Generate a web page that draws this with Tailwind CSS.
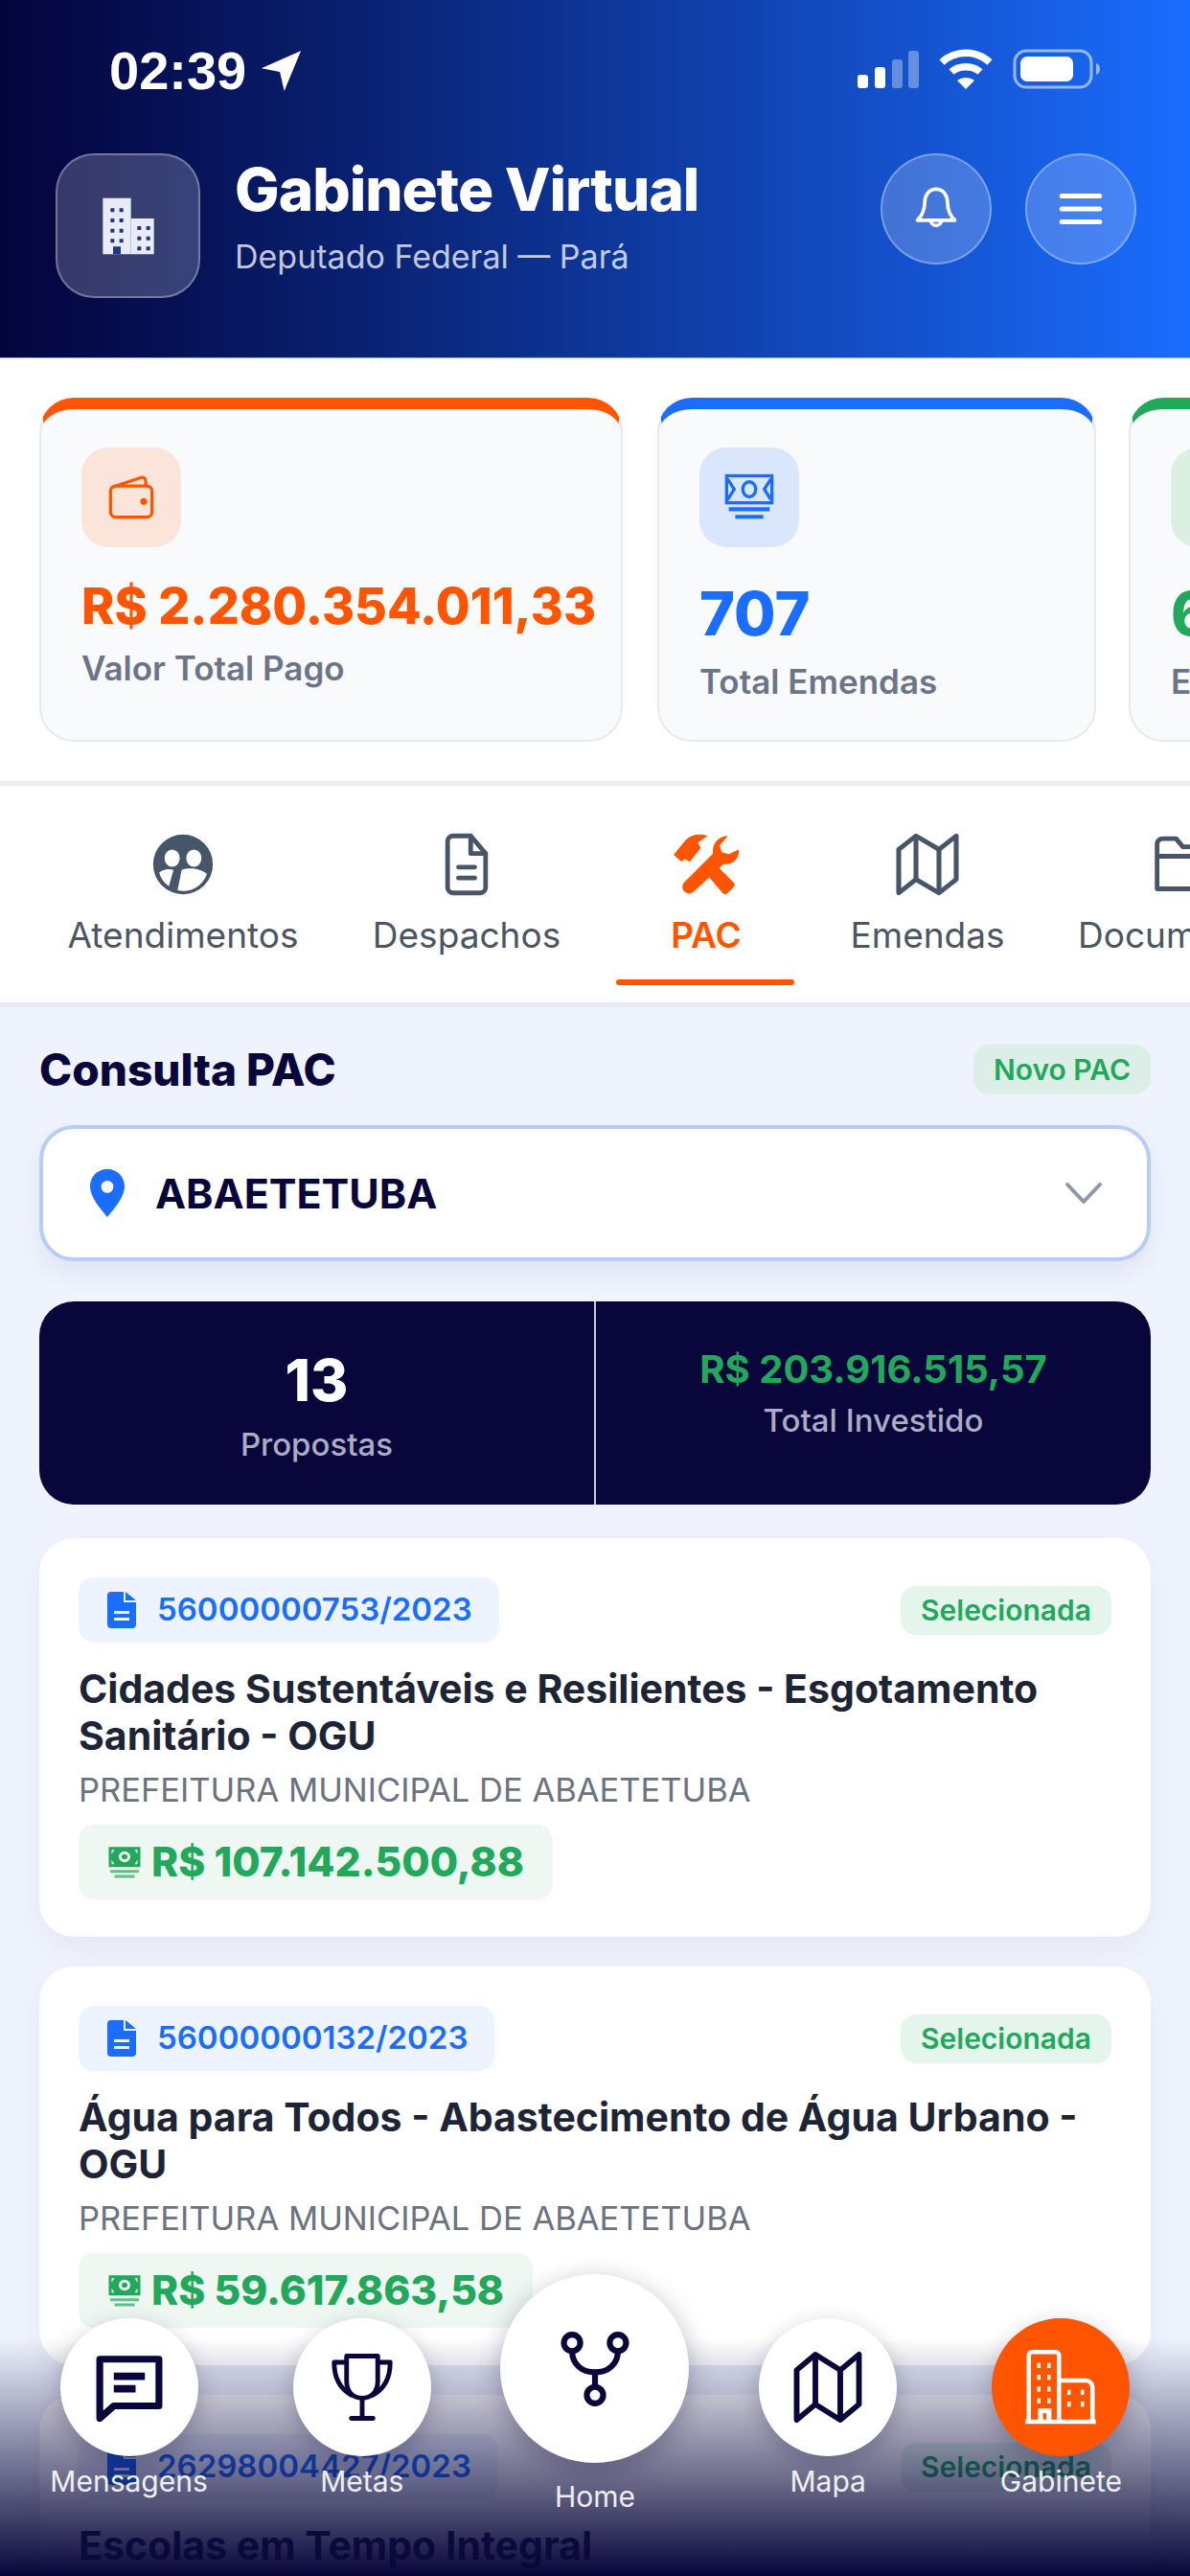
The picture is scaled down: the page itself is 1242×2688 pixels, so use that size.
<!DOCTYPE html>
<html lang="pt-BR">

<head>
    <meta charset="UTF-8" />
    <meta name="viewport" content="width=device-width, initial-scale=1.0" />
    <title>Gabinete Virtual</title>
    <script src="https://cdn.jsdelivr.net/npm/@tailwindcss/browser@4"></script>
</head>

<body class="font-['Inter','Noto_Sans',sans-serif] bg-[#eff3fd]">
    <div class="relative w-[1242px] h-[2688px] overflow-hidden bg-[#eff3fd]">

        <!-- Header -->
        <header class="h-[374px] bg-linear-to-r from-[#04043c] to-[#1a6dff] text-white px-[58px] border-b border-[#9dbcf0]">
            <div class="h-[160px] flex items-start justify-between pl-[56px]">
                <div class="flex items-center gap-[14px] mt-[46px]">
                    <span class="text-[56px] leading-[56px] font-semibold font-['Liberation_Sans',sans-serif]">02:39</span>
                    <svg class="w-[44px] h-[44px]" viewBox="0 0 24 24" fill="#fff"><path d="M23.500 .5 1 10.500l10.500 2L14 23.500z" /></svg>
                </div>
                <div class="flex items-center gap-[20px] mt-[50px] -translate-x-[35px]">
                    <svg class="w-[64px] h-[40px]" viewBox="0 0 64 40"><rect x="0" y="26" width="11" height="14" rx="3" fill="#fff" /><rect x="18" y="18" width="11" height="22" rx="3" fill="#fff" /><rect x="36" y="10" width="11" height="30" rx="3" fill="#fff" fill-opacity=".35" /><rect x="53" y="1" width="11" height="39" rx="3" fill="#fff" fill-opacity=".35" /></svg>
                    <svg class="w-[58px] h-[44px]" viewBox="0 0 58 44" fill="none" stroke="#fff" stroke-width="7.500"><path d="M4 15c14-13 36-13 50 0" /><path d="M14 25c8-7 22-7 30 0" /><path d="m29 43-9-9c5-4 13-4 18 0z" fill="#fff" stroke="none" /></svg>
                    <svg class="w-[92px] h-[42px]" viewBox="0 0 92 42"><rect x="2" y="2" width="80" height="38" rx="12" fill="none" stroke="#fff" stroke-opacity=".55" stroke-width="3" /><rect x="8" y="8" width="55" height="26" rx="7" fill="#fff" /><path d="M87 15c3 1 4 3 4 6s-1 5-4 6z" fill="#fff" fill-opacity=".55" /></svg>
                </div>
            </div>
            <div class="flex items-center">
                <div class="w-[151px] h-[151px] rounded-[40px] bg-white/20 border-2 border-white/30 flex items-center justify-center">
                    <svg class="w-[64px] h-[64px]" viewBox="0 0 24 24"><path d="M2 1h11v22H2z" fill="#e9ebf7" /><path d="M13 9h9v14h-9z" fill="#e9ebf7" /><path d="M5 5h1.500v1.500H5zM8.500 5H10v1.500H8.500zM5 9h1.500v1.500H5zM8.500 9H10v1.500H8.500zM5 13h1.500v1.500H5zM8.500 13H10v1.500H8.500zM5 17h1.500v1.500H5zM8.500 17H10v1.500H8.500zM6 20h3v3H6zM15.500 12H17v1.500h-1.500zM19 12h1.500v1.500H19zM15.500 16H17v1.500h-1.500zM19 16h1.500v1.500H19zM15.500 20H17v1.500h-1.500zM19 20h1.500v1.500H19z" fill="#24357f" /></svg>
                </div>
                <div class="ml-[36px] flex-1 -mt-[20px]">
                    <h1 class="text-[62px] leading-[72px] font-extrabold tracking-[-1px]">Gabinete Virtual</h1>
                    <p class="text-[34px] leading-[44px] mt-[12px] text-white/75">Deputado Federal — Pará</p>
                </div>
                <div class="flex gap-[35px] -mt-[36px] translate-x-[2px]">
                    <div class="w-[116px] h-[116px] rounded-full bg-white/20 border-2 border-white/30 flex items-center justify-center">
                        <svg class="w-[52px] h-[52px]" viewBox="0 0 24 24" fill="none" stroke="#fff" stroke-width="1.700" stroke-linecap="round" stroke-linejoin="round"><path d="M12 2.500c-3.500 0-5.500 3-5.500 6.500 0 4-1.500 6.500-3.500 8.500h18c-2-2-3.500-4.500-3.500-8.500 0-3.500-2-6.500-5.500-6.500z" /><path d="M9.500 17.500a2.500 2.500 0 0 0 5 0" /></svg>
                    </div>
                    <div class="w-[116px] h-[116px] rounded-full bg-white/20 border-2 border-white/30 flex items-center justify-center">
                        <svg class="w-[50px] h-[50px]" viewBox="0 0 24 24" fill="none" stroke="#fff" stroke-width="2.400" stroke-linecap="round"><path d="M2.500 5.500h19M2.500 12h19M2.500 18.500h19" /></svg>
                    </div>
                </div>
            </div>
        </header>

        <!-- Stats -->
        <section class="h-[446px] bg-white border-b-[5px] border-[#ececec] overflow-hidden flex gap-[36px] pl-[41px] pt-[41px]">
            <div class="w-[609px] h-[359px] shrink-0 rounded-[36px] bg-[#f9fafc] border-2 border-t-[12px] border-[#e6e9f0] border-t-[#ff5500] pl-[42px] pt-[40px]">
                <div class="w-[104px] h-[104px] rounded-[28px] bg-[#fbe5da] flex items-center justify-center">
                    <svg class="w-[52px] h-[52px]" viewBox="0 0 24 24" fill="none" stroke="#ff5500" stroke-width="1.500" stroke-linejoin="round"><rect x="2" y="6.500" width="20" height="15" rx="2.500" /><path d="M3 7 16.500 2.500c1.500-.5 2.500.5 2.500 2v2" /><circle cx="18" cy="14" r=".9" fill="#ff5500" /></svg>
                </div>
                <div class="mt-[27px] text-[52px] leading-[70px] font-extrabold text-[#ff5500] whitespace-nowrap">R$ 2.280.354.011,33</div>
                <div class="mt-[7px] text-[35px] leading-[44px] font-semibold text-[#6b7488]">Valor Total Pago</div>
            </div>
            <div class="w-[458px] h-[359px] shrink-0 rounded-[36px] bg-[#f9fafc] border-2 border-t-[12px] border-[#e6e9f0] border-t-[#1a6dff] pl-[42px] pt-[40px]">
                <div class="w-[104px] h-[104px] rounded-[28px] bg-[#dae6fb] flex items-center justify-center">
                    <svg class="w-[54px] h-[54px]" viewBox="0 0 24 24" fill="none" stroke="#1a6dff" stroke-width="1.500"><rect x="1.500" y="2" width="21" height="12.500" /><ellipse cx="12" cy="8.250" rx="3" ry="3.500" /><path d="m2 3.500 3 4.750-3 4.750M22 3.500l-3 4.750L22 13" /><path d="M2.500 17.500h19M5.500 21h13" stroke-width="1.800" /></svg>
                </div>
                <div class="mt-[27px] text-[63px] leading-[84px] font-extrabold text-[#1a6dff]">707</div>
                <div class="mt-[7px] text-[35px] leading-[44px] font-semibold text-[#6b7488] whitespace-nowrap">Total Emendas</div>
            </div>
            <div class="w-[456px] h-[359px] shrink-0 -ml-[2px] rounded-[36px] bg-[#f9fafc] border-2 border-t-[12px] border-[#e6e9f0] border-t-[#22a85a] pl-[42px] pt-[40px]">
                <div class="w-[104px] h-[104px] rounded-[28px] bg-[#dbefe3]"></div>
                <div class="mt-[27px] text-[63px] leading-[84px] font-extrabold text-[#22a85a]">6</div>
                <div class="mt-[7px] text-[35px] leading-[44px] font-semibold text-[#6b7488] whitespace-nowrap">Em</div>
            </div>
        </section>

        <!-- Tabs -->
        <nav class="relative h-[231px] bg-white border-b-[5px] border-[#e8ebf2] overflow-hidden text-[#4b5563] text-[37px] leading-[44px]">
            <div class="flex items-start pt-[48px] whitespace-nowrap">
                <div class="w-[252px] ml-[65px] flex flex-col items-center shrink-0">
                    <svg class="w-[68px] h-[68px]" viewBox="0 0 24 24" fill="#475569"><path fill-rule="evenodd" d="M12 1a11 11 0 1 0 0 22 11 11 0 0 0 0-22zM8 6.500a2.800 3.200 0 1 1 0 6.400 2.800 3.200 0 0 1 0-6.400zm8 0a2.800 3.200 0 1 1 0 6.400 2.800 3.200 0 0 1 0-6.400zM3.200 15c1.200-1 3-1.500 5.300-1L6.800 20a9 9 0 0 1-3.600-5zm6.800 6.500L11.500 14c3-1 7-.5 9.300 1.500A9 9 0 0 1 10 21.500z" /></svg>
                    <span class="mt-[18px]">Atendimentos</span>
                </div>
                <div class="w-[196px] ml-[72px] flex flex-col items-center shrink-0">
                    <svg class="w-[68px] h-[68px]" viewBox="0 0 24 24" fill="none" stroke="#475569" stroke-width="1.700" stroke-linejoin="round" stroke-linecap="round"><path d="M13.500 1.500H7A2 2 0 0 0 5 3.500v17a2 2 0 0 0 2 2h10a2 2 0 0 0 2-2V8z" /><path d="M13.500 1.500V8H19" /><path d="M9 13h6M9 17h6" /></svg>
                    <span class="mt-[18px]">Despachos</span>
                </div>
                <div class="w-[186px] ml-[59px] flex flex-col items-center shrink-0 text-[#ff5500] font-semibold">
                    <svg class="w-[80px] h-[68px]" viewBox="0 0 26 24" fill="#ff5500"><path d="M1 8.500 5.500 3c2-2 5-2.500 8-1.500L10 4l1 2-4 5-2-1-1 1zM25 6.500c.4 3-2 6-5.500 5.300L8.500 22c-1 1-2.500 1-3.500 0s-1-2.500 0-3.500L15.500 8C15 4.500 17.500 1.500 21 1.500L18 5l.8 2.500 2.500.7z" /><path d="m13.500 16 3.500-3.500 6 6c.6.6.6 1.400 0 2L21 22.500c-.6.6-1.400.6-2 0z" /></svg>
                    <span class="mt-[18px]">PAC</span>
                </div>
                <div class="w-[160px] ml-[58px] flex flex-col items-center shrink-0">
                    <svg class="w-[72px] h-[68px]" viewBox="0 0 24 24" preserveAspectRatio="none" fill="none" stroke="#475569" stroke-width="1.700" stroke-linejoin="round"><path d="M2 6.500 8 1.500l8 5 6-5v16l-6 5-8-5-6 5z" /><path d="M8 1.500v16M16 6.500v16" /></svg>
                    <span class="mt-[18px]">Emendas</span>
                </div>
                <div class="ml-[77px] flex flex-col items-center shrink-0">
                    <svg class="w-[68px] h-[68px]" viewBox="0 0 24 24" fill="none" stroke="#475569" stroke-width="1.700" stroke-linejoin="round"><path d="M2 21V4.500a2 2 0 0 1 2-2h5l2.500 3H20a2 2 0 0 1 2 2V21z" /><path d="M2 9h20" /></svg>
                    <span class="mt-[18px]">Documentos</span>
                </div>
            </div>
            <div class="absolute left-[643px] top-[202px] w-[186px] h-[6px] rounded-full bg-[#ff5500]"></div>
        </nav>

        <!-- PAC -->
        <main class="px-[41px] pt-[39px]">
            <div class="flex items-center justify-between h-[52px]">
                <h2 class="text-[46px] leading-[52px] font-extrabold text-[#08063a]">Consulta PAC</h2>
                <span class="h-[52px] px-[21px] rounded-[16px] bg-[#dcefe6] text-[30px] leading-[52px] font-semibold text-[#22a85a]">Novo PAC</span>
            </div>

            <div class="mt-[32px] h-[142px] rounded-[36px] bg-white border-[4px] border-[#b5cdf7] shadow-[0_12px_24px_rgba(30,60,140,0.08)] flex items-center pl-[48px] pr-[46px]">
                <svg class="w-[38px] h-[50px]" viewBox="0 0 19 25"><path fill-rule="evenodd" d="M9.500 0C4.200 0 .5 4 .5 9c0 5.500 5 11 9 16 4-5 9-10.500 9-16 0-5-3.700-9-9-9zm0 6a3.200 3.200 0 1 1 0 6.400 3.200 3.200 0 0 1 0-6.400z" fill="#1a6dff" /></svg>
                <span class="ml-[31px] flex-1 text-[43px] font-bold text-[#08063a]">ABAETETUBA</span>
                <svg class="w-[40px] h-[30px]" viewBox="0 0 40 30" fill="none" stroke="#8e97a8" stroke-width="4" stroke-linecap="round" stroke-linejoin="round"><path d="m3 6 17 18L37 6" /></svg>
            </div>

            <div class="mt-[42px] h-[212px] rounded-[36px] bg-[#08063a] flex">
                <div class="w-[581px] border-r-2 border-[#c9c8d6] flex flex-col items-center pt-[46px]">
                    <div class="text-[60px] leading-[72px] font-extrabold text-white">13</div>
                    <div class="mt-[10px] text-[33px] leading-[42px] font-medium text-[#adacc4]">Propostas</div>
                </div>
                <div class="flex-1 flex flex-col items-center pt-[46px]">
                    <div class="text-[40px] leading-[50px] font-bold text-[#22a85a]">R$ 203.916.515,57</div>
                    <div class="mt-[7px] text-[33px] leading-[42px] font-medium text-[#adacc4]">Total Investido</div>
                </div>
            </div>

            <!-- Proposal cards -->
            <div class="mt-[35px] flex flex-col gap-[31px]">
                <article class="h-[416px] rounded-[36px] bg-white shadow-[0_14px_30px_rgba(30,60,140,0.06)] px-[41px] pt-[41px]">
                    <div class="flex items-center justify-between">
                        <span class="h-[68px] pl-[30px] pr-[28px] rounded-[16px] bg-[#eef4ff] flex items-center gap-[22px] text-[33px] font-semibold text-[#1a6dff]">
                            <svg class="w-[30px] h-[38px]" viewBox="0 0 15 19"><path fill-rule="evenodd" d="M2 0h6.500v5.500H15V17a2 2 0 0 1-2 2H2a2 2 0 0 1-2-2V2a2 2 0 0 1 2-2zm7.500 0 5.500 4.500H9.500zM3.500 10v1.500h8V10zm0 3.500V15h8v-1.500z" fill="#1a6dff" /></svg>
                            56000000753/2023
                        </span>
                        <span class="h-[51px] px-[21px] rounded-[16px] bg-[#e4f5ec] text-[30px] leading-[51px] font-semibold text-[#22a85a]">Selecionada</span>
                    </div>
                    <h3 class="mt-[24px] text-[41px] leading-[49px] font-bold text-[#1c2436]">Cidades Sustentáveis e Resilientes - Esgotamento Sanitário - OGU</h3>
                    <p class="mt-[11px] text-[34.500px] leading-[42px] text-[#6b7280]">PREFEITURA MUNICIPAL DE ABAETETUBA</p>
                    <div class="mt-[15px] w-fit h-[78px] pl-[30px] pr-[30px] rounded-[16px] bg-[#eef7f2] flex items-center gap-[10px] text-[42.500px] font-extrabold text-[#22a85a]">
                        <svg class="w-[36px] h-[36px]" viewBox="0 0 24 24" fill="#22a85a"><path fill-rule="evenodd" d="M1 1.500h22v14H1zM12 4.500a4 3.800 0 1 0 0 7.600 4 3.800 0 0 0 0-7.600zm0 2a2 1.800 0 1 1 0 3.600 2 1.800 0 0 1 0-3.600zM3 3.500v3l2-3zm18 0h-2l2 3zM3 13.500h2l-2-3zm18 0v-3l-2 3z" /><path d="M2 17.500h20v2H2zM5 21h14v2H5z" fill-opacity=".7" /></svg>
                        R$ 107.142.500,88
                    </div>
                </article>

                <article class="h-[416px] rounded-[36px] bg-white shadow-[0_14px_30px_rgba(30,60,140,0.06)] px-[41px] pt-[41px]">
                    <div class="flex items-center justify-between">
                        <span class="h-[68px] pl-[30px] pr-[28px] rounded-[16px] bg-[#eef4ff] flex items-center gap-[22px] text-[33px] font-semibold text-[#1a6dff]">
                            <svg class="w-[30px] h-[38px]" viewBox="0 0 15 19"><path fill-rule="evenodd" d="M2 0h6.500v5.500H15V17a2 2 0 0 1-2 2H2a2 2 0 0 1-2-2V2a2 2 0 0 1 2-2zm7.500 0 5.500 4.500H9.500zM3.500 10v1.500h8V10zm0 3.500V15h8v-1.500z" fill="#1a6dff" /></svg>
                            56000000132/2023
                        </span>
                        <span class="h-[51px] px-[21px] rounded-[16px] bg-[#e4f5ec] text-[30px] leading-[51px] font-semibold text-[#22a85a]">Selecionada</span>
                    </div>
                    <h3 class="mt-[24px] text-[41px] leading-[49px] font-bold text-[#1c2436]">Água para Todos - Abastecimento de Água Urbano - OGU</h3>
                    <p class="mt-[11px] text-[34.500px] leading-[42px] text-[#6b7280]">PREFEITURA MUNICIPAL DE ABAETETUBA</p>
                    <div class="mt-[15px] w-fit h-[78px] pl-[30px] pr-[30px] rounded-[16px] bg-[#eef7f2] flex items-center gap-[10px] text-[42.500px] font-extrabold text-[#22a85a]">
                        <svg class="w-[36px] h-[36px]" viewBox="0 0 24 24" fill="#22a85a"><path fill-rule="evenodd" d="M1 1.500h22v14H1zM12 4.500a4 3.800 0 1 0 0 7.600 4 3.800 0 0 0 0-7.600zm0 2a2 1.800 0 1 1 0 3.600 2 1.800 0 0 1 0-3.600zM3 3.500v3l2-3zm18 0h-2l2 3zM3 13.500h2l-2-3zm18 0v-3l-2 3z" /><path d="M2 17.500h20v2H2zM5 21h14v2H5z" fill-opacity=".7" /></svg>
                        R$ 59.617.863,58
                    </div>
                </article>

                <article class="h-[416px] rounded-[36px] bg-white shadow-[0_14px_30px_rgba(30,60,140,0.06)] px-[41px] pt-[41px]">
                    <div class="flex items-center justify-between">
                        <span class="h-[68px] pl-[30px] pr-[28px] rounded-[16px] bg-[#eef4ff] flex items-center gap-[22px] text-[33px] font-semibold text-[#1a6dff]">
                            <svg class="w-[30px] h-[38px]" viewBox="0 0 15 19"><path fill-rule="evenodd" d="M2 0h6.500v5.500H15V17a2 2 0 0 1-2 2H2a2 2 0 0 1-2-2V2a2 2 0 0 1 2-2zm7.500 0 5.500 4.500H9.500zM3.500 10v1.500h8V10zm0 3.500V15h8v-1.500z" fill="#1a6dff" /></svg>
                            26298004427/2023
                        </span>
                        <span class="h-[51px] px-[21px] rounded-[16px] bg-[#e4f5ec] text-[30px] leading-[51px] font-semibold text-[#22a85a]">Selecionada</span>
                    </div>
                    <h3 class="mt-[24px] text-[41px] leading-[49px] font-bold text-[#1c2436]">Escolas em Tempo Integral</h3>
                </article>
            </div>
        </main>

        <!-- Bottom nav -->
        <div class="absolute left-0 right-0 bottom-0 h-[248px] bg-linear-to-b from-[#08063a]/0 to-[#08063a]"></div>
        <div class="absolute left-0 right-0 top-[2373px] grid grid-cols-5 items-end px-[13px] text-[30px] leading-[38px] text-white/90">
            <div class="flex flex-col items-center mb-[16px]">
                <div class="w-[144px] h-[144px] rounded-full bg-white shadow-[0_8px_24px_rgba(8,6,58,0.25)] flex items-center justify-center">
                    <svg class="w-[78px] h-[78px]" viewBox="0 0 24 24" fill="none" stroke="#08063a" stroke-width="2.200"><path d="M2.500 3h19v15H7l-4.500 4z" stroke-linejoin="round" /><path d="M7 8.500h10M7 12.500h7" stroke-width="2.400" /></svg>
                </div>
                <span class="mt-[7px]">Mensagens</span>
            </div>
            <div class="flex flex-col items-center mb-[16px]">
                <div class="w-[144px] h-[144px] rounded-full bg-white shadow-[0_8px_24px_rgba(8,6,58,0.25)] flex items-center justify-center">
                    <svg class="w-[78px] h-[78px]" viewBox="0 0 24 24" fill="none" stroke="#08063a" stroke-width="1.500" stroke-linejoin="round" stroke-linecap="round"><path d="M7 2h10v8c0 3.500-2 5.500-5 5.500S7 13.500 7 10z" /><path d="M7 4H3c0 4 1 8 5.500 10.500M17 4h4c0 4-1 8-5.500 10.500" /><path d="M12 15.500V22M8.500 22h7" /></svg>
                </div>
                <span class="mt-[7px]">Metas</span>
            </div>
            <div class="flex flex-col items-center">
                <div class="w-[197px] h-[197px] rounded-full bg-white shadow-[0_8px_28px_rgba(8,6,58,0.3)] flex items-center justify-center">
                    <svg class="w-[82px] h-[82px]" viewBox="0 0 24 24" fill="none" stroke="#08063a" stroke-width="1.800"><circle cx="5" cy="4" r="2.500" /><circle cx="19" cy="4" r="2.500" /><circle cx="12" cy="20" r="2.500" /><path d="M5 6.500c0 4 3 6.500 7 6.500s7-2.500 7-6.500M12 13v4.500" /></svg>
                </div>
                <span class="mt-[16px]">Home</span>
            </div>
            <div class="flex flex-col items-center mb-[16px]">
                <div class="w-[144px] h-[144px] rounded-full bg-white shadow-[0_8px_24px_rgba(8,6,58,0.25)] flex items-center justify-center">
                    <svg class="w-[78px] h-[78px]" viewBox="0 0 24 24" fill="none" stroke="#08063a" stroke-width="1.800" stroke-linejoin="round"><path d="M2 6.500 8 1.500l8 5 6-5v16l-6 5-8-5-6 5z" /><path d="M8 1.500v16M16 6.500v16" /></svg>
                </div>
                <span class="mt-[7px]">Mapa</span>
            </div>
            <div class="flex flex-col items-center mb-[16px]">
                <div class="w-[144px] h-[144px] rounded-full bg-[#ff5500] shadow-[0_8px_24px_rgba(8,6,58,0.25)] flex items-center justify-center">
                    <svg class="w-[84px] h-[84px]" viewBox="0 0 24 24" fill="none" stroke="#fff" stroke-width="1.300"><path d="M2.500 22V2.500a1 1 0 0 1 1-1h7a1 1 0 0 1 1 1V22M11.500 10h8a2 2 0 0 1 2 2v10M1.500 22.300h21" /><path d="M5 5.500h1M8 5.500h1M5 9h1M8 9h1M5 12.500h1M8 12.500h1M5 16h1M8 16h1M14 13.500h1M18 13.500h1M14 17h1M18 17h1M6 22v-3h2.500v3" stroke-width="1.500" /></svg>
                </div>
                <span class="mt-[7px]">Gabinete</span>
            </div>
        </div>
    </div>
</body>

</html>
